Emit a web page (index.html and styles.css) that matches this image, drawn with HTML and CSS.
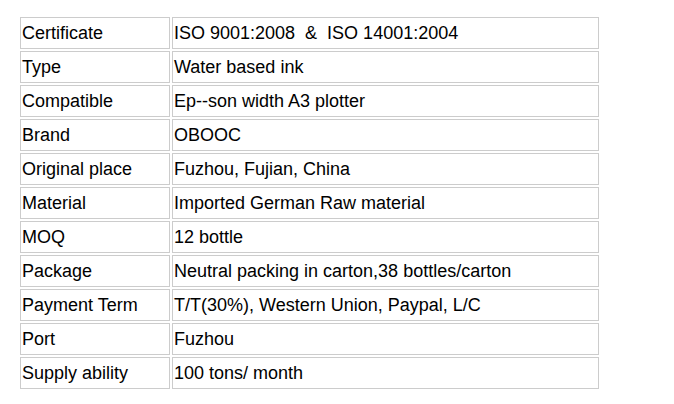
FILE: index.html
```html
<!DOCTYPE html>
<html>
<head>
<meta charset="utf-8">
<link rel="stylesheet" href="styles.css">
</head>
<body>
<table class="spec">
  <tr><td class="k">Certificate</td><td class="v">ISO 9001:2008&nbsp; &amp;&nbsp; ISO 14001:2004</td></tr>
  <tr><td class="k">Type</td><td class="v">Water based ink</td></tr>
  <tr><td class="k">Compatible</td><td class="v">Ep--son width A3 plotter</td></tr>
  <tr><td class="k">Brand</td><td class="v">OBOOC</td></tr>
  <tr><td class="k">Original place</td><td class="v">Fuzhou, Fujian, China</td></tr>
  <tr><td class="k">Material</td><td class="v">Imported German Raw material</td></tr>
  <tr><td class="k">MOQ</td><td class="v">12 bottle</td></tr>
  <tr><td class="k">Package</td><td class="v">Neutral packing in carton,38 bottles/carton</td></tr>
  <tr><td class="k">Payment Term</td><td class="v">T/T(30%), Western Union, Paypal, L/C</td></tr>
  <tr><td class="k">Port</td><td class="v">Fuzhou</td></tr>
  <tr><td class="k">Supply ability</td><td class="v">100 tons/ month</td></tr>
</table>
</body>
</html>
```
FILE: styles.css
```css
html, body {
  margin: 0;
  padding: 0;
  background: #fff;
}
body {
  padding: 15px 0 0 18px;
  font-family: "Liberation Sans", Arial, sans-serif;
  font-size: 18px;
  color: #000;
}
.spec {
  border-collapse: separate;
  border-spacing: 2px;
  margin: 0;
}
.spec td {
  border: 1px solid #cccccc;
  padding: 0 0 0 1px;
  height: 32px;
  box-sizing: border-box;
  vertical-align: middle;
  white-space: nowrap;
}
.spec .k {
  width: 150px;
}
.spec .v {
  width: 427px;
}
```
